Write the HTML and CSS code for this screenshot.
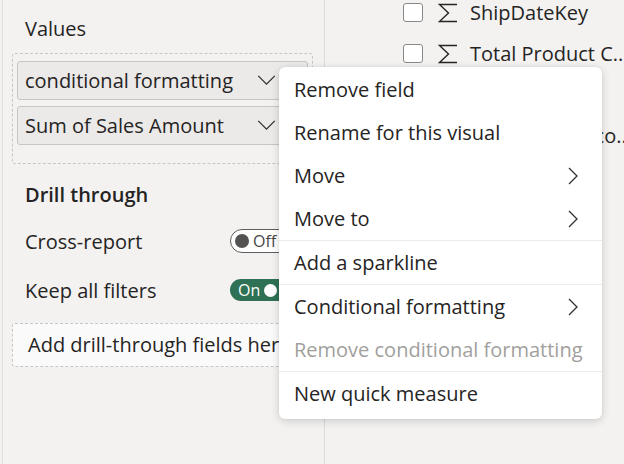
FILE: index.html
```html
<!DOCTYPE html>
<html>
<head>
<meta charset="utf-8">
<link rel="stylesheet" href="styles.css">
</head>
<body>
<div class="app">
  <div class="pane">
    <div class="section-label">Values</div>
    <div class="well">
      <div class="pill"><span>conditional formatting</span>
        <svg class="chev" viewBox="0 0 20 12"><path d="M1 1 L10 10 L19 1" fill="none" stroke="#323130" stroke-width="1.4"/></svg></div>
      <div class="pill"><span>Sum of Sales Amount</span>
        <svg class="chev" viewBox="0 0 20 12"><path d="M1 1 L10 10 L19 1" fill="none" stroke="#323130" stroke-width="1.4"/></svg></div>
    </div>
    <div class="heading">Drill through</div>
    <div class="row">
      <span>Cross-report</span>
      <div class="toggle off"><span class="knob"></span><span class="tlabel">Off</span></div>
    </div>
    <div class="row">
      <span>Keep all filters</span>
      <div class="toggle on"><span class="tlabel">On</span><span class="knob"></span></div>
    </div>
    <div class="dropbox">Add drill-through fields here</div>
  </div>
  <div class="fields">
    <div class="field"><span class="cb"></span><svg class="sigma" viewBox="0 0 20 20"><path d="M19 1.5 H1.5 L10.5 10 L1.5 18.5 H19" fill="none" stroke="#252423" stroke-width="1.4"/></svg><span class="fname">ShipDateKey</span></div>
    <div class="field"><span class="cb"></span><svg class="sigma" viewBox="0 0 20 20"><path d="M19 1.5 H1.5 L10.5 10 L1.5 18.5 H19" fill="none" stroke="#252423" stroke-width="1.4"/></svg><span class="fname">Total Product C...</span></div>
    <div class="field"><span class="cb"></span><svg class="sigma" viewBox="0 0 20 20"><path d="M19 1.5 H1.5 L10.5 10 L1.5 18.5 H19" fill="none" stroke="#252423" stroke-width="1.4"/></svg><span class="fname">Quantity</span></div>
    <div class="field"><span class="cb"></span><svg class="sigma" viewBox="0 0 20 20"><path d="M19 1.5 H1.5 L10.5 10 L1.5 18.5 H19" fill="none" stroke="#252423" stroke-width="1.4"/></svg><span class="fname">Unit Price Disco...</span></div>
  </div>
</div>
<div class="menu">
  <div class="item">Remove field</div>
  <div class="item">Rename for this visual</div>
  <div class="item">Move<svg class="arrow" viewBox="0 0 10 18"><path d="M1 1 L9 9 L1 17" fill="none" stroke="#323130" stroke-width="1.3"/></svg></div>
  <div class="item">Move to<svg class="arrow" viewBox="0 0 10 18"><path d="M1 1 L9 9 L1 17" fill="none" stroke="#323130" stroke-width="1.3"/></svg></div>
  <div class="sep"></div>
  <div class="item">Add a sparkline</div>
  <div class="sep"></div>
  <div class="item">Conditional formatting<svg class="arrow" viewBox="0 0 10 18"><path d="M1 1 L9 9 L1 17" fill="none" stroke="#323130" stroke-width="1.3"/></svg></div>
  <div class="item disabled">Remove conditional formatting</div>
  <div class="sep"></div>
  <div class="item">New quick measure</div>
</div>
</body>
</html>
```
FILE: styles.css
```css
html, body {
  margin: 0;
  padding: 0;
  width: 624px;
  height: 464px;
  overflow: hidden;
  background: #f3f2f1;
  font-family: "Open Sans", "Noto Sans", sans-serif;
  font-size: 20px;
  color: #252423;
}
.app {
  display: flex;
  height: 464px;
}
.pane {
  width: 321px;
  flex: none;
  margin-left: 2px;
  border-left: 1px solid #e1dfdd;
  border-right: 1px solid #dcdad8;
  display: flex;
  flex-direction: column;
  padding-top: 15px;
  box-sizing: content-box;
}
.section-label {
  padding-left: 22px;
  height: 28px;
  line-height: 28px;
}
.well {
  margin: 10px 0 0 9px;
  width: 291px;
  padding: 7px 4px 18px 4px;
  border: 1px dashed #c8c6c4;
  border-radius: 3px;
  display: flex;
  flex-direction: column;
  gap: 6px;
}
.pill {
  height: 37px;
  background: #ebeae9;
  border: 1px solid #c8c6c4;
  border-radius: 3px;
  display: flex;
  align-items: center;
  justify-content: space-between;
  padding: 0 31px 0 7px;
  white-space: nowrap;
}
.chev {
  width: 19px;
  height: 11px;
  flex: none;
}
.heading {
  font-weight: 600;
  padding-left: 22px;
  margin-top: 17px;
  height: 28px;
  line-height: 28px;
}
.row {
  display: flex;
  align-items: center;
  justify-content: space-between;
  padding-left: 22px;
  height: 24px;
  margin-top: 20px;
  white-space: nowrap;
}
.row + .row { margin-top: 25px; }
.toggle {
  width: 62px;
  border-radius: 12px;
  display: flex;
  align-items: center;
  gap: 4px;
  font-size: 16px;
  box-sizing: border-box;
  margin-right: 32px;
}
.toggle.off {
  border: 1.5px solid #605e5c;
  background: #fff;
  padding-left: 4px;
  height: 24px;
  color: #484644;
}
.toggle.off .knob {
  width: 14px;
  height: 14px;
  border-radius: 50%;
  background: #555351;
}
.toggle.on {
  background: #2f7154;
  color: #fff;
  padding-left: 8px;
  height: 22px;
}
.toggle.on .knob {
  width: 13px;
  height: 13px;
  border-radius: 50%;
  background: #fff;
}
.dropbox {
  margin: 21px 0 0 9px;
  width: 285px;
  height: 42px;
  border: 1px dashed #c8c6c4;
  border-radius: 3px;
  background: #fbfafa;
  padding-left: 15px;
  line-height: 42px;
  white-space: nowrap;
  overflow: hidden;
  box-sizing: content-box;
}
.fields {
  flex: 1;
  margin-top: -8px;
  padding-left: 78px;
  display: flex;
  flex-direction: column;
}
.field {
  display: flex;
  align-items: center;
  height: 41px;
  flex: none;
  white-space: nowrap;
}
.cb {
  width: 18px;
  height: 17px;
  border: 1.5px solid #8a8886;
  border-radius: 3px;
  background: #fff;
  flex: none;
}
.sigma {
  margin-left: 15px;
  margin-right: 12px;
  width: 20px;
  height: 20px;
  flex: none;
}
.menu {
  position: absolute;
  left: 279px;
  top: 67px;
  width: 323px;
  background: #fff;
  border-radius: 6px;
  box-shadow: 0 2px 8px rgba(0,0,0,0.16), 0 0 2px rgba(0,0,0,0.08);
  padding: 1px 0 4px;
  display: flex;
  flex-direction: column;
}
.item {
  height: 43px;
  display: flex;
  align-items: center;
  justify-content: space-between;
  padding: 0 24px 0 15px;
  color: #252423;
  white-space: nowrap;
}
.item.disabled {
  color: #a19f9d;
}
.arrow {
  width: 10px;
  height: 18px;
  flex: none;
}
.sep {
  height: 1px;
  background: #edebe9;
}
```
